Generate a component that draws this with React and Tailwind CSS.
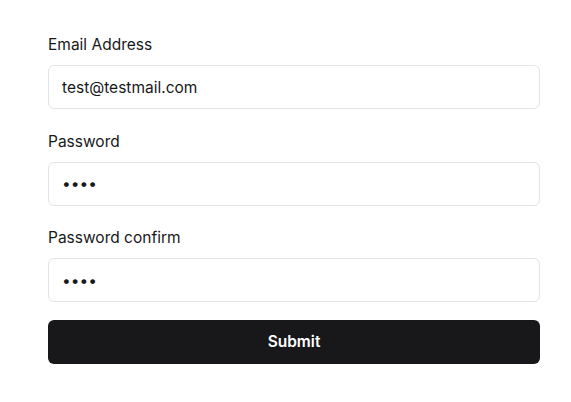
export default function App() {
  const fields = [
    { label: "Email Address", type: "email", value: "test@testmail.com" },
    { label: "Password", type: "password", value: "1234" },
    { label: "Password confirm", type: "password", value: "1234" },
  ];

  return (
    <div className="min-h-[402px] w-full bg-white pl-12 pt-[33px] font-['Inter',sans-serif] text-zinc-900">
      <form className="flex w-[492px] flex-col" onSubmit={(e) => e.preventDefault()}>
        <div className="flex flex-col gap-[20.5px]">
          {fields.map((f) => (
            <div key={f.label} className="flex flex-col">
              <label className="mb-2 text-[15.5px] leading-6 text-zinc-900">{f.label}</label>
              <input
                type={f.type}
                defaultValue={f.value}
                className="h-11 w-full rounded-md border border-zinc-200 bg-white px-[13px] text-[15.5px] text-zinc-900 outline-none"
              />
            </div>
          ))}
        </div>
        <button
          type="submit"
          className="mt-[18px] h-11 w-full rounded-md bg-[#18181b] text-[15.5px] font-semibold text-white"
        >
          Submit
        </button>
      </form>
    </div>
  );
}
